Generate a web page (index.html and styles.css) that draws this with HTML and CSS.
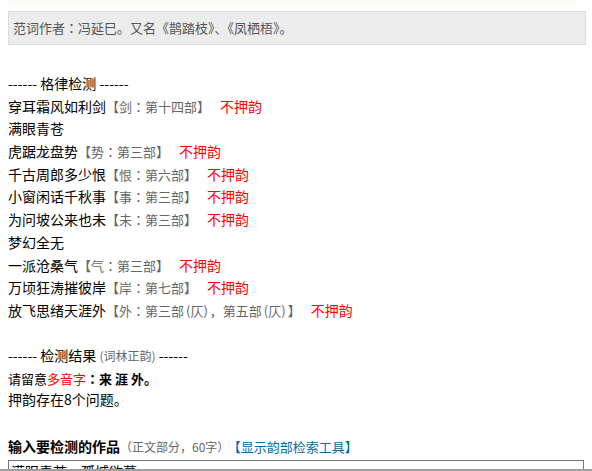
FILE: index.html
```html
<!DOCTYPE html>
<html lang="zh-CN">
<head>
<meta charset="utf-8">
<title>格律检测</title>
<link rel="stylesheet" href="styles.css">
</head>
<body>
<div class="strip"></div>
<div class="note">范词作者<span class="c" lang="ja">：</span>冯延巳。又名《鹊踏枝》、《凤栖梧》。</div>
<div class="check">
  <div class="line">------ 格律检测 ------</div>
  <div class="line">穿耳霜风如利剑<span class="rhyme">【剑<span class="c" lang="ja">：</span>第十四部】</span><span class="bad">不押韵</span></div>
  <div class="line">满眼青苍</div>
  <div class="line">虎踞龙盘势<span class="rhyme">【势<span class="c" lang="ja">：</span>第三部】</span><span class="bad">不押韵</span></div>
  <div class="line">千古周郎多少恨<span class="rhyme">【恨<span class="c" lang="ja">：</span>第六部】</span><span class="bad">不押韵</span></div>
  <div class="line">小窗闲话千秋事<span class="rhyme">【事<span class="c" lang="ja">：</span>第三部】</span><span class="bad">不押韵</span></div>
  <div class="line">为问坡公来也未<span class="rhyme">【未<span class="c" lang="ja">：</span>第三部】</span><span class="bad">不押韵</span></div>
  <div class="line">梦幻全无</div>
  <div class="line">一派沧桑气<span class="rhyme">【气<span class="c" lang="ja">：</span>第三部】</span><span class="bad">不押韵</span></div>
  <div class="line">万顷狂涛摧彼岸<span class="rhyme">【岸<span class="c" lang="ja">：</span>第七部】</span><span class="bad">不押韵</span></div>
  <div class="line">放飞思绪天涯外<span class="rhyme">【外<span class="c" lang="ja">：</span>第三部<span class="z">(仄)</span>，第五部<span class="z">(仄)</span>】</span><span class="bad">不押韵</span></div>
  <div class="line"></div>
  <div class="line">------ 检测结果 <span class="dict">(词林正韵)</span> ------</div>
  <div class="warn">请留意<span class="red">多音字</span><b><span class="c" lang="ja">：</span>来 涯 外。</b></div>
  <div class="line">押韵存在8个问题。</div>
</div>
<div class="input-head"><b class="title">输入要检测的作品</b><span class="hint">（正文部分，60字）</span><a class="tool" href="#">【显示韵部检索工具】</a></div>
<textarea class="poem">满眼青苍，孤城欲暮</textarea>
<div class="hbar"></div>
</body>
</html>
```

FILE: styles.css
```css
html, body {
  margin: 0;
  padding: 0;
  background: #fff;
}
body {
  padding: 0 8px;
  font-family: "Noto Sans CJK SC", "Noto Sans", sans-serif;
  font-size: 14px;
  color: #000;
}
.strip {
  height: 5px;
  width: 569px;
  background: #fafcf7;
}
.note {
  margin-top: 6px;
  width: 572px;
  height: 32px;
  line-height: 32px;
  padding-left: 4px;
  border: 1px solid #dcdcdc;
  background: #ececec;
  color: #555;
  font-size: 13px;
}
.c {
  font-family: "Noto Sans CJK JP", "Noto Sans CJK SC", sans-serif;
}
.check {
  margin-top: 27px;
}
.line {
  height: 22.7px;
  line-height: 22.7px;
  white-space: nowrap;
}
.rhyme {
  font-size: 13px;
  color: #666;
}
.z {
  padding: 0 2px;
}
.bad {
  color: #f00;
  margin-left: 10px;
}
.dict {
  font-size: 12px;
  color: #666;
}
.warn {
  margin-top: 3px;
  height: 18px;
  line-height: 18px;
  font-size: 13px;
}
.red {
  color: #f00;
}
.input-head {
  margin-top: 24px;
  height: 22px;
  line-height: 22px;
  white-space: nowrap;
}
.title {
  font-size: 14px;
  font-weight: bold;
}
.hint {
  font-size: 12px;
  color: #666;
  margin-right: 5px;
}
.tool {
  font-size: 13px;
  color: #0a6a9c;
  text-decoration: none;
}
.poem {
  display: block;
  margin: 3px 0 0 0;
  box-sizing: border-box;
  width: 576px;
  height: 120px;
  padding: 0 2px;
  border: 1px solid #767676;
  font-family: "Noto Sans CJK SC", sans-serif;
  font-size: 14px;
  line-height: 20px;
  overflow-y: scroll;
  resize: none;
}
.poem::-webkit-scrollbar {
  width: 17px;
  background: #f0f0f0;
}
.hbar {
  position: fixed;
  left: 0;
  right: 0;
  bottom: 0;
  height: 2px;
  background: #a0a0a0;
}
```
